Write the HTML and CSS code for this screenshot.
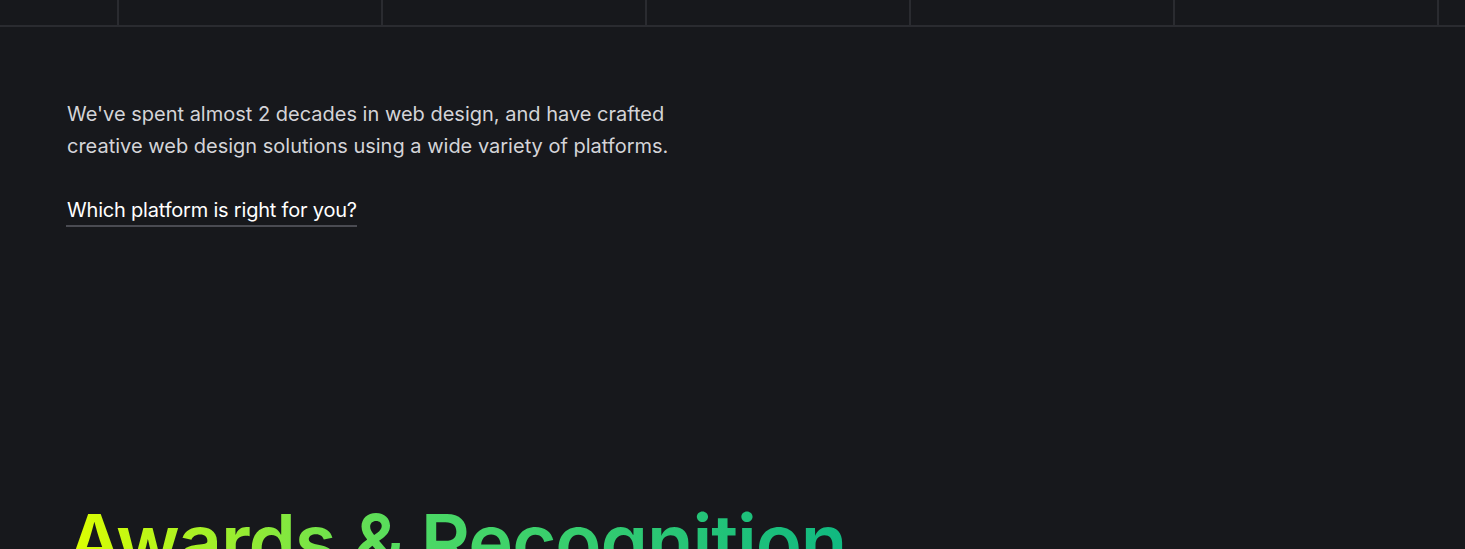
FILE: index.html
```html
<!DOCTYPE html>
<html lang="en">
<head>
<meta charset="utf-8">
<title>Platforms</title>
<link rel="stylesheet" href="styles.css">
</head>
<body>
<div class="grid-row">
  <div class="cell cell-first"></div>
  <div class="cell"></div>
  <div class="cell"></div>
  <div class="cell"></div>
  <div class="cell"></div>
  <div class="cell"></div>
  <div class="cell cell-last"></div>
</div>
<section class="intro">
  <p class="lead">We've spent almost 2 decades in web design, and have crafted creative web design solutions using a wide variety of platforms.</p>
  <a class="link" href="#">Which platform is right for you?</a>
</section>
<section class="awards">
  <h2 class="awards-title">Awards &amp; Recognition</h2>
</section>
</body>
</html>
```
FILE: styles.css
```css
html, body {
  margin: 0;
  padding: 0;
  background: #17181c;
  overflow: hidden;
}
body {
  font-family: Inter, "Noto Sans", sans-serif;
  color: #d6d6da;
  width: 1465px;
  height: 549px;
}
.grid-row {
  display: flex;
  height: 25px;
  border-bottom: 2px solid #2a2b30;
}
.cell {
  flex: 0 0 262px;
  border-left: 2px solid #2a2b30;
}
.cell-first {
  flex: 0 0 117px;
  border-left: none;
}
.cell-last {
  flex: 1 1 auto;
}
.intro {
  padding: 71px 0 0 67px;
}
.lead {
  margin: 0;
  width: 620px;
  font-size: 20px;
  line-height: 32px;
  color: #d4d4d8;
}
.link {
  display: inline-block;
  margin-top: 34px;
  color: #ffffff;
  text-decoration: none;
  font-size: 20px;
  line-height: 29px;
  letter-spacing: -0.2px;
  border-bottom: 2px solid #4a4b52;
  margin-left: -1px;
  padding-left: 1px;
}
.awards {
  padding: 276px 0 0 67px;
}
.awards-title {
  margin: 0;
  font-size: 76px;
  font-weight: 600;
  line-height: 1;
  letter-spacing: -1.1px;
  display: inline-block;
  white-space: nowrap;
  background: linear-gradient(90deg, #dfff00 0%, #4cd964 45%, #10b981 100%);
  -webkit-background-clip: text;
  background-clip: text;
  color: transparent;
}
```
